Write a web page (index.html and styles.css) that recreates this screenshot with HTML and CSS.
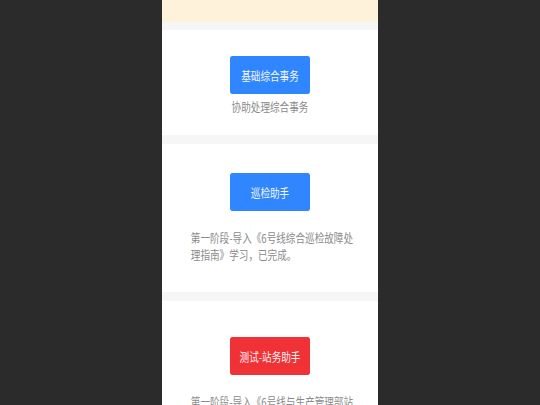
FILE: index.html
```html
<!DOCTYPE html>
<html lang="zh-CN">
<head>
<meta charset="utf-8">
<title>助手</title>
<link rel="stylesheet" href="styles.css">
</head>
<body>
<div class="column">
  <div class="notice"></div>
  <div class="card card-1">
    <div class="btn btn-blue">基础综合事务</div>
    <div class="subtitle">协助处理综合事务</div>
  </div>
  <div class="card card-2">
    <div class="btn btn-blue">巡检助手</div>
    <div class="desc">第一阶段-导入《6号线综合巡检故障处理指南》学习，已完成。</div>
  </div>
  <div class="card card-3">
    <div class="btn btn-red">测试-站务助手</div>
    <div class="desc">第一阶段-导入《6号线与生产管理部站务手册》学习，已完成。</div>
  </div>
</div>
</body>
</html>
```

FILE: styles.css
```css
html, body {
  margin: 0;
  padding: 0;
  height: 100%;
  overflow: hidden;
}
body {
  background: #2b2b2b;
  font-family: "Noto Sans CJK SC", "Noto Sans", sans-serif;
}
.column {
  width: 270px;
  margin: 0 auto;
  height: 405px;
  background: #f6f6f6;
  transform: scaleX(0.8);
  transform-origin: center top;
  display: flex;
  flex-direction: column;
  gap: 0;
  overflow: hidden;
}
.notice {
  height: 22px;
  background: #fff2da;
  flex: none;
  margin-bottom: 8px;
}
.card {
  background: #ffffff;
  display: flex;
  flex-direction: column;
  align-items: center;
  flex: none;
  box-sizing: border-box;
}
.card-1 {
  height: 105px;
  padding-top: 26px;
  margin-bottom: 9px;
}
.card-2 {
  height: 148px;
  padding-top: 29px;
  margin-bottom: 9px;
}
.card-3 {
  height: 200px;
  padding-top: 36px;
}
.btn {
  width: 100px;
  height: 38px;
  border-radius: 3px;
  color: #f4f8ff;
  font-size: 12px;
  display: flex;
  align-items: center;
  justify-content: center;
  flex: none;
}
.btn-blue {
  background: #2f86ff;
}
.btn-red {
  background: #f03237;
  color: #fff3f3;
}
.subtitle {
  margin-top: 4px;
  font-size: 12px;
  line-height: 17px;
  color: #8a8a8a;
}
.desc {
  align-self: stretch;
  margin-top: 18px;
  padding: 0 28px 0 36px;
  font-size: 12px;
  line-height: 17px;
  color: #8a8a8a;
}
```
